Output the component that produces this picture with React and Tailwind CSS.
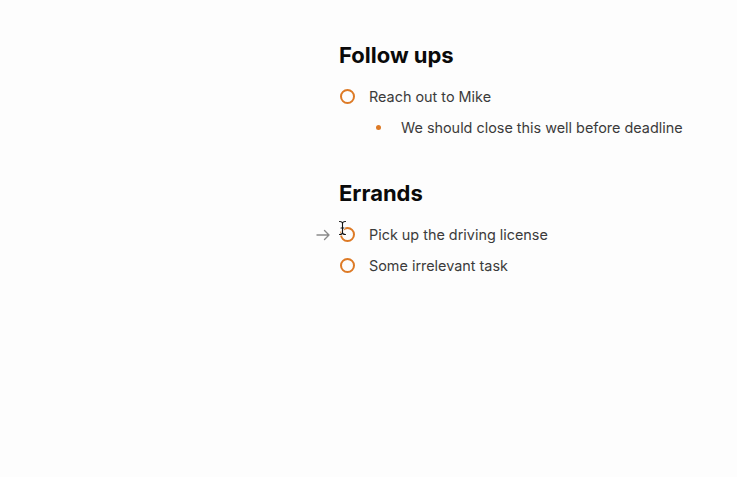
import React from 'react';

function Circle() {
  return (
    <span className="flex h-[31px] w-[16px] shrink-0 items-center justify-center">
      <span className="block h-[15px] w-[15px] rounded-full border-2 border-[#dd7a26]" />
    </span>
  );
}

function Task({ text, hovered }) {
  return (
    <div className="relative flex h-[31px] items-center gap-[14px]">
      {hovered && (
        <span className="absolute left-[-23px] top-0 flex h-[31px] items-center">
          <svg width="15" height="12" viewBox="0 0 15 12" fill="none" stroke="#8a8a8a" strokeWidth="1.4" strokeLinecap="round" strokeLinejoin="round">
            <path d="M1 6h12M8.5 1.5 13 6l-4.5 4.5" />
          </svg>
        </span>
      )}
      <Circle />
      <span className="text-[14.4px] leading-[31px] text-[#3b3b3b]">{text}</span>
      {hovered && (
        <span className="pointer-events-none absolute left-[-1px] top-[1px]">
          <svg width="9" height="16" viewBox="0 0 9 16" fill="none">
            <path d="M1.5 1.5c1.5 0 3 .5 3 2v9c0 1.5-1.5 2-3 2M7.5 1.5c-1.5 0-3 .5-3 2v9c0 1.5 1.5 2 3 2M3 8h3" stroke="#fff" strokeWidth="2.6" strokeLinecap="round" />
            <path d="M1.5 1.5c1.5 0 3 .5 3 2v9c0 1.5-1.5 2-3 2M7.5 1.5c-1.5 0-3 .5-3 2v9c0 1.5 1.5 2 3 2M3 8h3" stroke="#111" strokeWidth="1.1" strokeLinecap="round" />
          </svg>
        </span>
      )}
    </div>
  );
}

function Note({ text }) {
  return (
    <div className="flex h-[31px] items-center gap-[16px] pl-[32px]">
      <span className="flex w-[14px] items-center justify-center">
        <span className="block h-[5px] w-[5px] rounded-full bg-[#dd7a26]" />
      </span>
      <span className="text-[14.4px] leading-[31px] text-[#3b3b3b]">{text}</span>
    </div>
  );
}

function Section({ title, children }) {
  return (
    <section>
      <h2 className="h-[30px] text-[22px] font-bold leading-[30px] text-[#0a0a0a]">{title}</h2>
      <div className="mt-[11px] flex flex-col">{children}</div>
    </section>
  );
}

export default function App() {
  return (
    <div
      className="min-h-[477px] w-full bg-[#fdfdfd] pl-[339px] pt-[40px]"
      style={{ fontFamily: 'Inter, "Noto Sans", sans-serif' }}
    >
      <div className="flex flex-col gap-[35px]">
        <Section title="Follow ups">
          <Task text="Reach out to Mike" />
          <Note text="We should close this well before deadline" />
        </Section>
        <Section title="Errands">
          <Task text="Pick up the driving license" hovered />
          <Task text="Some irrelevant task" />
        </Section>
      </div>
    </div>
  );
}
